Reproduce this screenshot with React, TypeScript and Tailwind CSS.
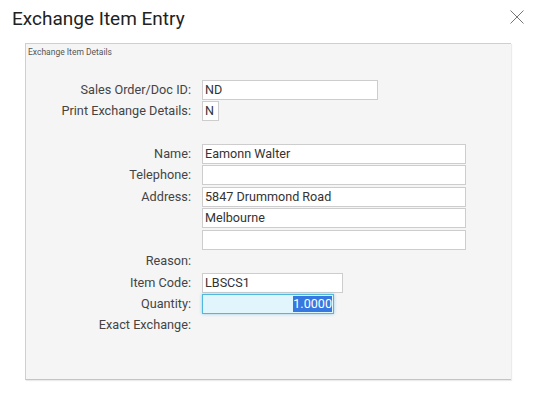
import React from "react";

const rows: { label?: string; h: number; input?: { w: number; value?: string; kind?: "sel" } }[] = [
  { label: "Sales Order/Doc ID:", h: 21, input: { w: 176, value: "ND" } },
  { label: "Print Exchange Details:", h: 21, input: { w: 17, value: "N" } },
  { h: 22 },
  { label: "Name:", h: 21, input: { w: 264, value: "Eamonn Walter" } },
  { label: "Telephone:", h: 22, input: { w: 264, value: "" } },
  { label: "Address:", h: 21, input: { w: 264, value: "5847 Drummond Road" } },
  { h: 22, input: { w: 264, value: "Melbourne" } },
  { h: 21, input: { w: 264, value: "" } },
  { label: "Reason:", h: 22 },
  { label: "Item Code:", h: 21, input: { w: 141, value: "LBSCS1" } },
  { label: "Quantity:", h: 21, input: { w: 132, value: "1.0000", kind: "sel" } },
  { label: "Exact Exchange:", h: 21 },
];

export default function App() {
  return (
    <div
      className="w-[536px] h-[393px] bg-white relative overflow-hidden"
      style={{ fontFamily: "Roboto, 'Liberation Sans', sans-serif" }}
    >
      <div className="flex items-start justify-between pl-[12px] pr-[11px] pt-[6px] h-[43px]">
        <div className="text-[19px] leading-[26px] text-[#222]">Exchange Item Entry</div>
        <svg width="16" height="16" viewBox="0 0 16 16" className="mt-[3px]">
          <path d="M1.5 1.5 L14.5 14.5 M14.5 1.5 L1.5 14.5" stroke="#777" strokeWidth="1" fill="none" />
        </svg>
      </div>
      <div className="ml-[25px] w-[486px] h-[337px] bg-[#f5f5f5] border-t border-l border-[#cfcfcf] border-b border-b-[#c4c4c4] shadow-[1px_1px_1px_rgba(0,0,0,0.08)]">
        <div className="pl-[2px] pt-[2px] text-[8.5px] leading-[12px] text-[#555]">Exchange Item Details</div>
        <div className="mt-[22px] flex flex-col">
          {rows.map((r, i) => (
            <div key={i} className="flex items-start" style={{ height: r.h }}>
              <div className="w-[165px] text-right text-[12.7px] leading-[20px] text-[#444] whitespace-nowrap">
                {r.label ?? ""}
              </div>
              <div className="ml-[11px]">
                {r.input &&
                  (r.input.kind === "sel" ? (
                    <div
                      className="h-[20px] bg-[#e1f6fc] border border-[#4fb8dc] shadow-[0_0_3px_rgba(80,180,230,0.6)] flex items-center justify-end pr-[1px] text-[12.6px] leading-[16px]"
                      style={{ width: r.input.w }}
                    >
                      <span className="bg-[#3478e0] text-white px-0">{r.input.value}</span>
                    </div>
                  ) : (
                    <div
                      className="h-[20px] bg-white border border-[#cdcdcd] pl-[2px] text-[12.6px] leading-[18px] text-[#333] whitespace-nowrap overflow-hidden"
                      style={{ width: r.input.w }}
                    >
                      {r.input.value}
                    </div>
                  ))}
              </div>
            </div>
          ))}
        </div>
      </div>
    </div>
  );
}
